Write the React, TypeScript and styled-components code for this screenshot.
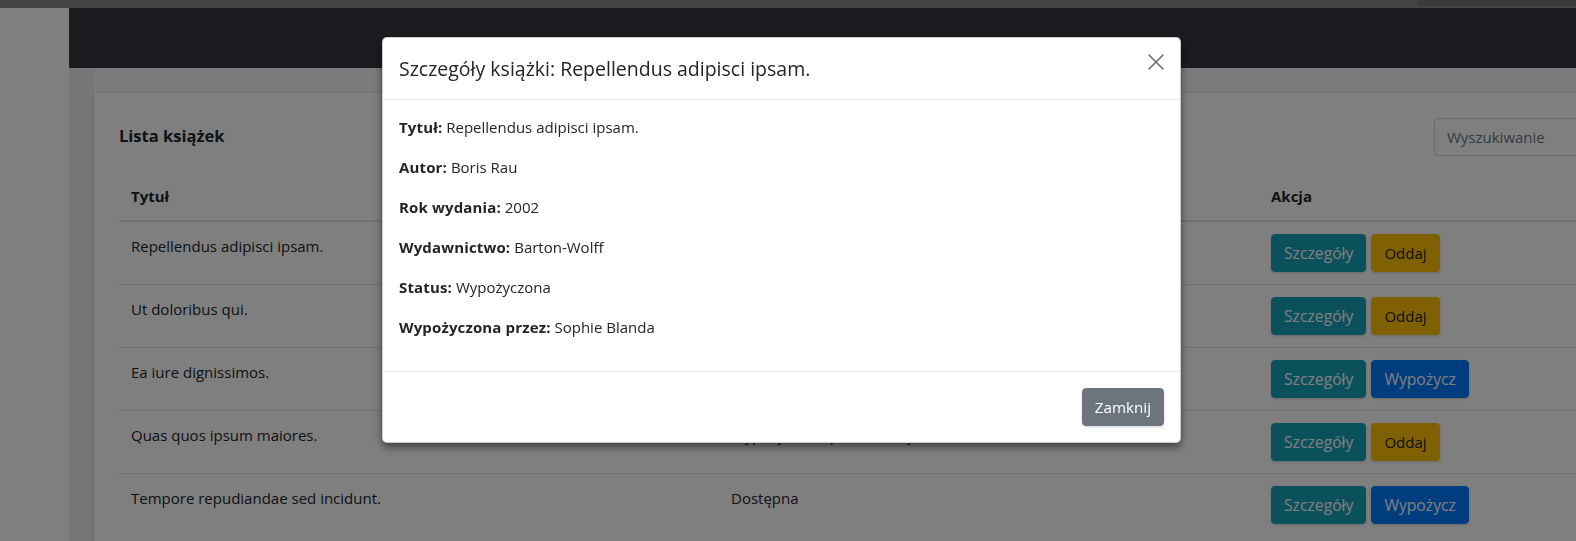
import React from "react";
import styled, { createGlobalStyle } from "styled-components";

const GlobalStyle = createGlobalStyle`
  html, body {
    margin: 0;
    padding: 0;
    overflow: hidden;
    background: #ffffff;
  }
  body {
    font-family: "Open Sans", "Noto Sans", Arial, sans-serif;
    font-size: 15px;
    line-height: 24px;
    color: #212529;
  }
  * { box-sizing: border-box; }
`;

const Screen = styled.div`
  width: 1576px;
  height: 541px;
  overflow: hidden;
  display: flex;
  flex-direction: column;
`;

const ScrollTrack = styled.div`
  height: 8px;
  flex-shrink: 0;
  background: #747474;
  border-bottom: 2px solid #888888;
  display: flex;
`;

const ScrollThumb = styled.div`
  width: 1418px;
  height: 6px;
  background: #868686;
`;

const Main = styled.div`
  flex: 1;
  display: flex;
  min-height: 0;
`;

const Sidebar = styled.aside`
  width: 69px;
  flex-shrink: 0;
  background: #ffffff;
`;

const Column = styled.div`
  flex: 1;
  display: flex;
  flex-direction: column;
  min-width: 0;
`;

const Navbar = styled.nav`
  height: 60px;
  flex-shrink: 0;
  background: #35373f;
`;

const ContentWrapper = styled.div`
  flex: 1;
  padding: 25px 0 0 25px;
  background: linear-gradient(to right, #eceef3 0, #eceef3 25px, #f5f7f9 25px);
  display: flex;
  align-items: flex-start;
`;

const Card = styled.section`
  width: 1565px;
  flex-shrink: 0;
  background: #ffffff;
  padding: 25px 25px;
  box-shadow: 0 0 1px rgba(0, 0, 0, 0.125), 0 1px 3px rgba(0, 0, 0, 0.2);
`;

const CardHead = styled.div`
  display: flex;
  align-items: center;
  justify-content: space-between;
  margin-bottom: 16px;
`;

const CardTitle = styled.h3`
  margin: 0 0 4px;
  font-size: 16.5px;
  font-weight: 700;
  line-height: 21px;
`;

const SearchInput = styled.input`
  width: 200px;
  height: 38px;
  padding: 6px 12px;
  border: 1px solid #ced4da;
  border-radius: 4px;
  font-family: inherit;
  font-size: 15px;
  color: #495057;
  &::placeholder { color: #6c757d; }
`;

const Table = styled.table`
  width: 100%;
  border-collapse: collapse;
  table-layout: fixed;
`;

const Th = styled.th<{ $w?: number }>`
  width: ${(p) => (p.$w ? `${p.$w}px` : "auto")};
  text-align: left;
  padding: 12px;
  font-weight: 700;
  vertical-align: bottom;
  border-bottom: 2px solid #dee2e6;
`;

const Td = styled.td`
  padding: 12px;
  vertical-align: top;
  border-top: 1px solid #dee2e6;
`;

const Actions = styled.div`
  display: flex;
  gap: 5px;
`;

const variants: Record<string, { bg: string; fg: string }> = {
  info: { bg: "#17a2b8", fg: "#ffffff" },
  warning: { bg: "#ffc107", fg: "#212529" },
  primary: { bg: "#007bff", fg: "#ffffff" },
  secondary: { bg: "#6c757d", fg: "#ffffff" },
};

const Button = styled.button<{ $v: keyof typeof variants; $fs?: number }>`
  height: 38px;
  padding: 6px 12px;
  border: 1px solid ${(p) => variants[p.$v].bg};
  border-radius: 4px;
  background: ${(p) => variants[p.$v].bg};
  color: ${(p) => variants[p.$v].fg};
  font-family: inherit;
  font-size: ${(p) => p.$fs ?? 15.7}px;
  line-height: 24px;
  box-shadow: 0 1px 3px rgba(0, 0, 0, 0.18);
  cursor: pointer;
`;

const Backdrop = styled.div`
  position: fixed;
  inset: 0;
  background: rgba(0, 0, 0, 0.5);
  z-index: 1040;
`;

const Modal = styled.div`
  position: fixed;
  top: 37px;
  left: 382px;
  width: 799px;
  z-index: 1050;
  background: #ffffff;
  border: 1px solid rgba(0, 0, 0, 0.2);
  border-radius: 5px;
  box-shadow: 0 4px 8px rgba(0, 0, 0, 0.5);
`;

const ModalHeader = styled.div`
  display: flex;
  align-items: flex-start;
  justify-content: space-between;
  padding: 16px;
  border-bottom: 1px solid #e3e6ea;
`;

const ModalTitle = styled.h5`
  margin: 0;
  font-size: 19.5px;
  font-weight: 400;
  line-height: 29px;
`;

const CloseButton = styled.button`
  width: 16px;
  height: 16px;
  margin-top: 0;
  padding: 0;
  border: 0;
  background: transparent;
  opacity: 0.55;
  cursor: pointer;
  display: flex;
`;

const ModalBody = styled.div`
  padding: 15px 16px 16px;
`;

const Detail = styled.p`
  margin: 0 0 16px;
  & strong { letter-spacing: 0.15px; }
`;

const ModalFooter = styled.div`
  display: flex;
  justify-content: flex-end;
  padding: 12px;
  border-top: 1px solid #e3e6ea;
`;

const FooterButton = styled(Button)`
  margin: 4px;
`;

type Book = { title: string; status: string; borrowed: boolean };

const books: Book[] = [
  { title: "Repellendus adipisci ipsam.", status: "Wypożyczona przez Sophie Blanda", borrowed: true },
  { title: "Ut doloribus qui.", status: "Wypożyczona przez Maya Kertzmann", borrowed: true },
  { title: "Ea iure dignissimos.", status: "Dostępna", borrowed: false },
  { title: "Quas quos ipsum maiores.", status: "Wypożyczona przez Lonny Pacocha", borrowed: true },
  { title: "Tempore repudiandae sed incidunt.", status: "Dostępna", borrowed: false },
];

const details: [string, string][] = [
  ["Tytuł:", "Repellendus adipisci ipsam."],
  ["Autor:", "Boris Rau"],
  ["Rok wydania:", "2002"],
  ["Wydawnictwo:", "Barton-Wolff"],
  ["Status:", "Wypożyczona"],
  ["Wypożyczona przez:", "Sophie Blanda"],
];

export default function App() {
  return (
    <>
      <GlobalStyle />
      <Screen>
        <ScrollTrack>
          <ScrollThumb />
        </ScrollTrack>
        <Main>
          <Sidebar />
          <Column>
            <Navbar />
            <ContentWrapper>
              <Card>
                <CardHead>
                  <CardTitle>Lista książek</CardTitle>
                  <SearchInput placeholder="Wyszukiwanie" />
                </CardHead>
                <Table>
                  <thead>
                    <tr>
                      <Th $w={600}>Tytuł</Th>
                      <Th $w={540}>Status</Th>
                      <Th>Akcja</Th>
                    </tr>
                  </thead>
                  <tbody>
                    {books.map((b) => (
                      <tr key={b.title}>
                        <Td>{b.title}</Td>
                        <Td>{b.status}</Td>
                        <Td>
                          <Actions>
                            <Button $v="info">Szczegóły</Button>
                            {b.borrowed ? (
                              <Button $v="warning" $fs={15}>Oddaj</Button>
                            ) : (
                              <Button $v="primary">Wypożycz</Button>
                            )}
                          </Actions>
                        </Td>
                      </tr>
                    ))}
                  </tbody>
                </Table>
              </Card>
            </ContentWrapper>
          </Column>
        </Main>
      </Screen>
      <Backdrop />
      <Modal role="dialog">
        <ModalHeader>
          <ModalTitle>Szczegóły książki: Repellendus adipisci ipsam.</ModalTitle>
          <CloseButton aria-label="Zamknij">
            <svg width="16" height="16" viewBox="0 0 16 16">
              <path d="M1 1L15 15M15 1L1 15" stroke="#000" strokeWidth="1.7" strokeLinecap="round" fill="none" />
            </svg>
          </CloseButton>
        </ModalHeader>
        <ModalBody>
          {details.map(([k, v]) => (
            <Detail key={k}>
              <strong>{k}</strong> {v}
            </Detail>
          ))}
        </ModalBody>
        <ModalFooter>
          <FooterButton $v="secondary" $fs={15.2}>Zamknij</FooterButton>
        </ModalFooter>
      </Modal>
    </>
  );
}
